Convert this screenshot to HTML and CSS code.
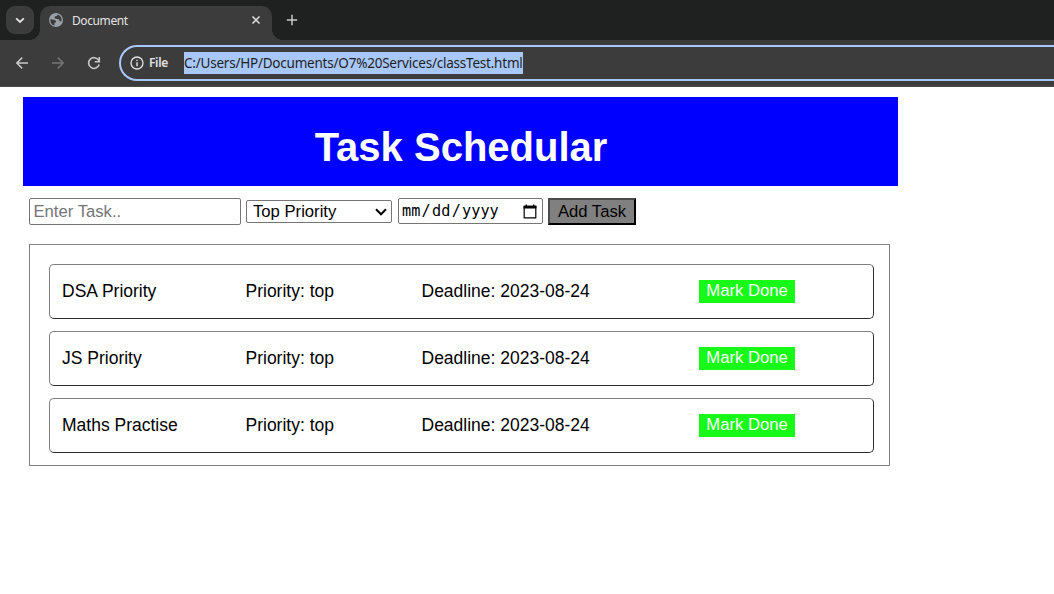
FILE: index.html
```html
<!DOCTYPE html>
<html lang="en">
<head>
<meta charset="utf-8">
<title>Document</title>
<link rel="stylesheet" href="styles.css">
</head>
<body>
<header class="browser">
  <div class="tabs">
    <div class="tab-search"><svg width="28" height="28" viewBox="0 0 28 28"><path d="M10.2 12.3 14 16l3.8-3.7" fill="none" stroke="#e3e3e3" stroke-width="1.8"/></svg></div>
    <div class="tab">
      <svg class="globe" width="14" height="14" viewBox="0 0 14 14"><circle cx="7" cy="7" r="7" fill="#9aa0a6"/><path d="M1.3 6.2 4 6.4 6.6 7.4 7.3 9 5.6 10l-.2 2.5A5.8 5.8 0 0 1 1.3 6.2ZM8.6 1.5 8 3 6 3.3 5.5 5.2 8 6l2 .3.6 2 1.9.2A5.8 5.8 0 0 0 8.6 1.5Z" fill="#3c3c3c"/></svg>
      <span class="tab-title">Document</span>
      <svg class="close" width="10" height="10" viewBox="0 0 10 10"><path d="m1.5 1.5 7 7m0-7-7 7" stroke="#e3e3e3" stroke-width="1.5"/></svg>
    </div>
    <svg class="plus" width="12" height="12" viewBox="0 0 12 12"><path d="M6 .8v10.4M.8 6h10.4" stroke="#c7c7c7" stroke-width="1.5"/></svg>
  </div>
  <div class="toolbar">
    <div class="nav">
      <svg width="14" height="14" viewBox="0 0 14 14"><path d="M13 7H2M7.2 1.6 1.8 7l5.4 5.4" fill="none" stroke="#c7c7c7" stroke-width="1.5"/></svg>
      <svg width="14" height="14" viewBox="0 0 14 14"><path d="M1 7h11M6.8 1.6 12.2 7l-5.4 5.4" fill="none" stroke="#757575" stroke-width="1.5"/></svg>
      <svg width="14" height="14" viewBox="0 0 14 14"><path d="M11.7 4.3A5.4 5.4 0 1 0 12.2 8.6M12.3 1v4.7H7.8" fill="none" stroke="#c7c7c7" stroke-width="1.6"/></svg>
    </div>
    <div class="address">
      <svg width="14" height="14" viewBox="0 0 14 14"><circle cx="7" cy="7" r="6" fill="none" stroke="#e3e3e3" stroke-width="1.3"/><path d="M7 6.2v4M7 3.7v1.4" stroke="#e3e3e3" stroke-width="1.4"/></svg>
      <span class="scheme">File</span>
      <span class="url">C:/Users/HP/Documents/O7%20Services/classTest.html</span>
    </div>
  </div>
</header>
<main class="page">
  <h1 class="title">Task Schedular</h1>
  <div class="controls">
    <input class="task-input" type="text" placeholder="Enter Task..">
    <div class="priority"><span>Top Priority</span><svg width="12" height="8" viewBox="0 0 12 8"><path d="m1 1.3 5 5 5-5" fill="none" stroke="#000" stroke-width="2"/></svg></div>
    <div class="date"><span class="date-text"><span>mm</span><span>/</span><span>dd</span><span>/</span><span>yyyy</span></span><svg width="14" height="15" viewBox="0 0 14 15"><path d="M1.2 2.4h11.6v11.4H1.2Z" fill="none" stroke="#000" stroke-width="1.2"/><path d="M.6 1.8h12.8v2.8H.6ZM2.6.4h1.4v2H2.6Zm7.4 0h1.4v2H10Z"/></svg></div>
    <button class="add">Add Task</button>
  </div>
  <section class="tasks">
    <div class="task"><span>DSA Priority</span><span>Priority: top</span><span>Deadline: 2023-08-24</span><button class="done">Mark Done</button></div>
    <div class="task"><span>JS Priority</span><span>Priority: top</span><span>Deadline: 2023-08-24</span><button class="done">Mark Done</button></div>
    <div class="task"><span>Maths Practise</span><span>Priority: top</span><span>Deadline: 2023-08-24</span><button class="done">Mark Done</button></div>
  </section>
</main>
</body>
</html>
```
FILE: styles.css
```css
* { box-sizing: border-box; }
body { margin: 0; height: 594px; overflow: hidden; background: #fff; color: #000; font-family: "Liberation Sans", Arial, sans-serif; }
svg { display: block; flex: none; }

.browser { height: 87px; background: #3c3c3c; border-bottom: 1px solid #4a4a4a; font-family: "Noto Sans", sans-serif; }
.tabs { height: 40px; display: flex; background: #1f2120; padding-left: 6px; }
.tab-search { width: 28px; height: 28px; margin-top: 6px; border-radius: 9px; background: #3c3c3c; }
.tab { position: relative; width: 232px; height: 34px; margin: 6px 0 0 6px; padding: 0 11px 6px 9px; display: flex; align-items: center; background: #3c3c3c; border-radius: 10px 10px 0 0; }
.tab::before, .tab::after { content: ""; position: absolute; bottom: 0; width: 10px; height: 10px; }
.tab::before { left: -10px; background: radial-gradient(circle at 0 0, transparent 9.5px, #3c3c3c 10px); }
.tab::after { right: -10px; background: radial-gradient(circle at 100% 0, transparent 9.5px, #3c3c3c 10px); }
.tab-title { margin: 1px 0 0 9px; color: #e3e3e3; font-size: 12px; line-height: 16px; letter-spacing: -.4px; }
.close { margin-left: auto; }
.plus { margin: 14px 0 0 14px; }
.toolbar { height: 46px; display: flex; }
.nav { width: 119px; display: flex; align-items: center; gap: 22px; padding-left: 15px; }
.address { flex: 1; height: 36px; margin-top: 5px; display: flex; align-items: center; border: 2px solid #a8c7fa; border-right: 0; border-radius: 18px 0 0 18px; padding-left: 9px; white-space: nowrap; }
.scheme { width: 35px; margin: -1px 0 0 5px; color: #e3e3e3; font-size: 12px; font-weight: 600; letter-spacing: -.35px; }
.url { height: 22px; line-height: 22px; background: #a8c7fa; color: #1f1f1f; font-size: 13.5px; letter-spacing: -.22px; }

.page { width: 875px; margin: 10px 0 0 23px; }
.title { height: 89px; margin: 0; padding: 27px 0 0 1px; background: #00f; color: #fff; font-size: 40px; line-height: 46px; text-align: center; }
.controls { display: flex; align-items: flex-start; height: 27px; margin: 12px 0 0 6px; font-size: 16.667px; }
.task-input { width: 212px; height: 27px; border: 1px solid #767676; border-radius: 2px; padding: 1px 3px 0 3.5px; font: inherit; }
.task-input::placeholder { color: #757575; }
.priority { width: 146px; height: 23px; margin: 2px 0 0 5px; padding: 0 4px 0 6px; display: flex; align-items: center; justify-content: space-between; border: 1px solid #767676; border-radius: 2px; line-height: 21px; }
.date { width: 145px; height: 26px; margin-left: 6px; padding: 0 5px 0 2px; display: flex; align-items: center; justify-content: space-between; border: 1px solid #767676; border-radius: 2px; }
.date-text { display: flex; gap: 1.3px; padding-left: 1px; font-family: "DejaVu Sans Mono", monospace; font-size: 15.2px; }
.add { width: 88px; height: 27px; margin-left: 5px; padding: 1px 0 0; background: gray; border: 2px solid; border-color: #4c4c4c #000 #000 #4c4c4c; border-radius: 0; color: #000; font: inherit; }
.tasks { height: 222px; width: 861px; margin: 19px 0 0 6px; padding: 19px 15px 0 19px; display: flex; flex-direction: column; gap: 12px; border: 1px solid gray; }
.task { height: 55px; display: grid; grid-template-columns: 183.5px 176px 277.5px 96px; align-items: center; padding: 0 12px; border: 1px solid; border-color: #808080 #2b2b2b #2b2b2b #808080; border-radius: 5px; font-size: 17.5px; white-space: nowrap; }
.done { height: 23px; margin-bottom: 1px; padding: 0 0 2px; border: 0; background: #17f917; color: #fff; font-family: inherit; font-size: 16.667px; line-height: 19px; }
```
